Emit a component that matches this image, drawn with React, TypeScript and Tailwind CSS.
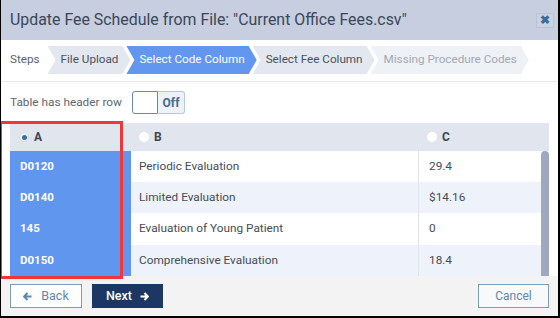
import React from "react";

const chevron = "polygon(0 0, calc(100% - 8px) 0, 100% 50%, calc(100% - 8px) 100%, 0 100%, 8px 50%)";

function Step({ label, state }: { label: string; state: "done" | "active" | "todo" }) {
  const cls =
    state === "active"
      ? "bg-[#6396ef] text-white"
      : state === "done"
      ? "bg-[#e3e7ef] text-[#4a5160]"
      : "bg-[#eef1f6] text-[#a3a9b3]";
  return (
    <div
      className={`h-[28px] shrink-0 whitespace-nowrap flex items-center pl-[13px] pr-[12px] -ml-[4px] first:ml-0 text-[11.7px] ${cls}`}
      style={{ clipPath: chevron }}
    >
      {label}
    </div>
  );
}

function Radio({ checked }: { checked?: boolean }) {
  return checked ? (
    <span className="w-[10px] h-[10px] rounded-full bg-[#eef2f7] border border-[#d5dde8] flex items-center justify-center">
      <span className="w-[5px] h-[5px] rounded-full bg-[#3e6d99]" />
    </span>
  ) : (
    <span className="w-[10px] h-[10px] rounded-full bg-white" />
  );
}

const rows = [
  ["D0120", "Periodic Evaluation", "29.4"],
  ["D0140", "Limited Evaluation", "$14.16"],
  ["145", "Evaluation of Young Patient", "0"],
  ["D0150", "Comprehensive Evaluation", "18.4"],
];

export default function App() {
  return (
    <div className="w-[560px] h-[318px] bg-white border-l border-r-2 border-b-2 border-black flex flex-col overflow-hidden font-['Roboto',sans-serif] whitespace-nowrap">
      <div className="h-[40px] shrink-0 bg-[#c6cee0] flex items-center justify-between pl-[9px] pr-[4px]">
        <div className="text-[15.9px] text-[#3b4658]">
          Update Fee Schedule from File: "Current Office Fees.csv"
        </div>
        <div className="w-[18px] h-[15px] border border-[#bcc4d4] bg-[#cad2e2] flex items-center justify-center text-[#3a6b97] text-[12px] font-bold leading-none">
          ✖
        </div>
      </div>

      <div className="shrink-0 flex items-center pt-[6px] pb-[7px] pl-[9px] border-b border-[#e6e8ec]">
        <div className="text-[11.7px] text-[#5d636d] mr-[8px]">Steps</div>
        <div className="flex">
          <Step label="File Upload" state="done" />
          <Step label="Select Code Column" state="active" />
          <Step label="Select Fee Column" state="done" />
          <Step label="Missing Procedure Codes" state="todo" />
        </div>
      </div>

      <div className="shrink-0 flex items-center pt-[9px] pb-[7px] pl-[9px]">
        <div className="text-[11.8px] text-[#5f6570] w-[122px]">Table has header row</div>
        <div className="flex h-[23px] w-[53px]">
          <div className="w-[26px] h-full bg-white border-[1.5px] border-[#6f88a3] rounded-l-[3px]" />
          <div className="flex-1 h-full bg-[#eef2f8] border border-l-0 border-[#b9c6d6] rounded-r-[3px] flex items-center justify-center text-[12px] font-bold text-[#3f6b92]">
            Off
          </div>
        </div>
      </div>

      <div className="relative shrink-0 px-[9px] pt-[2px]">
        <div className="flex h-[28px] bg-[#e1e5ed] text-[12px] font-bold text-[#3e4450]">
          <div className="w-[121px] flex items-center gap-[5px] pl-[9px]">
            <Radio checked />
            <span>A</span>
          </div>
          <div className="w-[287px] flex items-center gap-[5px] pl-[8px]">
            <Radio />
            <span>B</span>
          </div>
          <div className="flex-1 flex items-center gap-[5px] pl-[9px]">
            <Radio />
            <span>C</span>
          </div>
        </div>
        <div className="flex">
          <div className="flex-1 flex flex-col">
            {rows.map((r, i) => (
              <div
                key={i}
                className={`flex ${i === 2 ? "h-[32px]" : "h-[31px]"} text-[11.8px] ${
                  i % 2 === 1 ? "bg-[#eef3fb]" : "bg-white"
                }`}
              >
                <div className="w-[121px] bg-[#6196ef] text-white text-[11.5px] font-bold flex items-center pl-[10px]">
                  {r[0]}
                </div>
                <div className="w-[287px] flex items-center pl-[8px] text-[#474c55]">{r[1]}</div>
                <div className="flex-1 flex items-center pl-[10px] text-[#474c55] border-l border-[#dfe4ec]">
                  {r[2]}
                </div>
              </div>
            ))}
          </div>
          <div className="w-[8px] bg-[#9ea9c0] rounded-t-[4px]" />
        </div>
        <div className="absolute left-[-2px] top-0 w-[124px] h-[158px] border-[3px] border-[#f2353c] pointer-events-none" />
      </div>

      <div className="flex-1 bg-[#f3f3f3] flex items-start justify-between pt-[8px] px-[9px]">
        <div className="flex gap-[10px]">
          <button className="w-[72px] h-[24px] bg-white border border-[#7d9db9] flex items-center justify-center gap-[9px] text-[12.5px] text-[#5f87a9]">
            <svg width="9" height="9" viewBox="0 0 9 9" fill="none" stroke="currentColor" strokeWidth="2">
              <path d="M8.5 4.5H1.5M4.5 1L1.2 4.5 4.5 8" />
            </svg>
            Back
          </button>
          <button className="w-[71px] h-[24px] bg-[#1d3764] flex items-center justify-center gap-[8px] text-[12.5px] font-medium text-white">
            Next
            <svg width="9" height="9" viewBox="0 0 9 9" fill="none" stroke="currentColor" strokeWidth="2">
              <path d="M0.5 4.5H7.5M4.5 1l3.3 3.5L4.5 8" />
            </svg>
          </button>
        </div>
        <button className="w-[71px] h-[24px] bg-[#f8f9fb] border border-[#7d9db9] flex items-center justify-center text-[12px] text-[#5f87a9]">
          Cancel
        </button>
      </div>
    </div>
  );
}
